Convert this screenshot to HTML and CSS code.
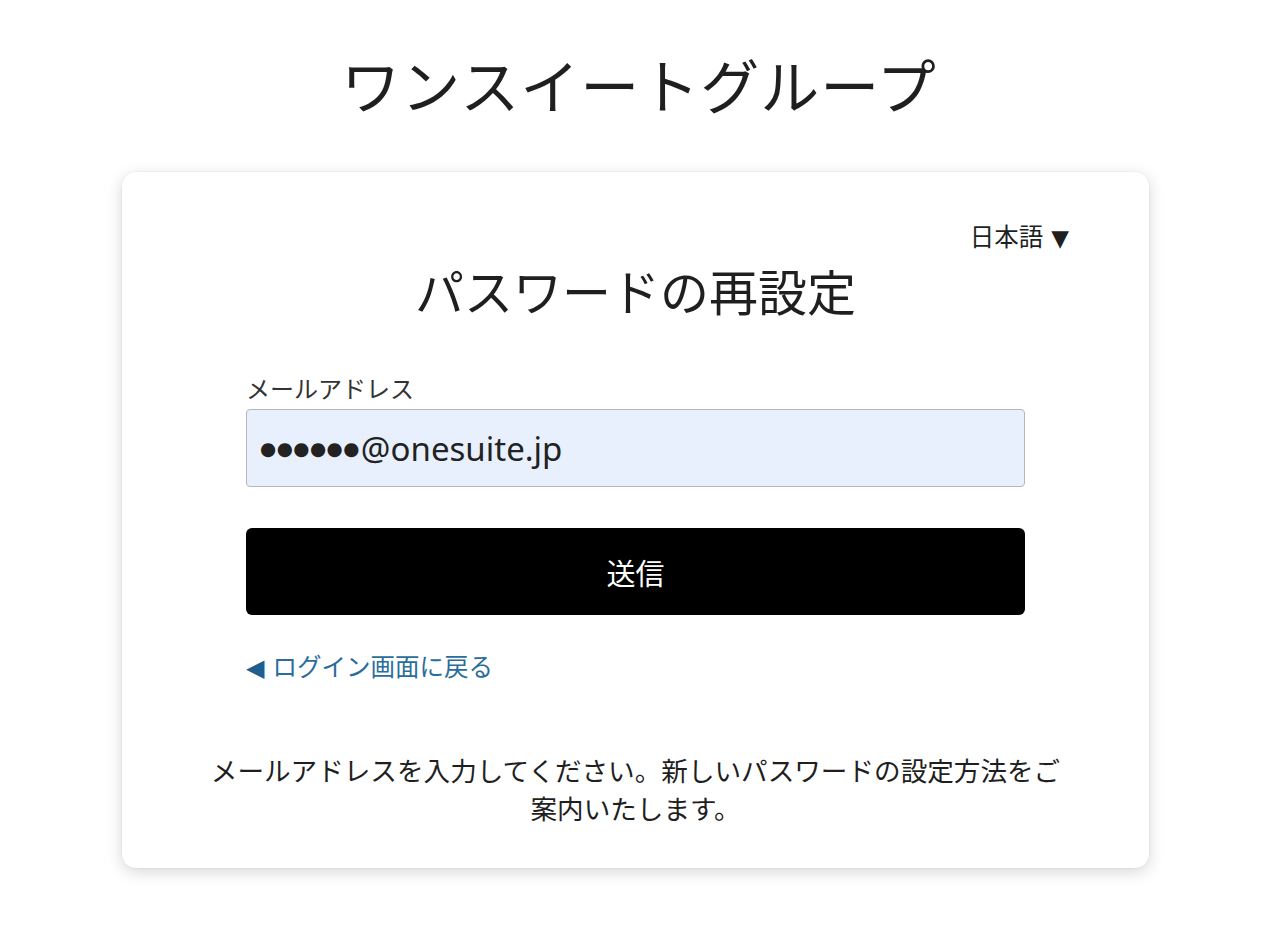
FILE: index.html
```html
<!DOCTYPE html>
<html lang="ja">
  <head>
    <meta charset="UTF-8" />
    <meta name="viewport" content="width=device-width, initial-scale=1.0" />
    <title>パスワードの再設定</title>
    <link rel="stylesheet" href="styles.css">
  </head>
  <body>
    <h1 class="brand">ワンスイートグループ</h1>

    <div class="card">
      <div class="lang-row">
        <button class="lang">日本語<span class="caret">▼</span></button>
      </div>

      <h2 class="card-title">パスワードの再設定</h2>

      <form class="reset-form">
        <label class="field-label" for="email">メールアドレス</label>
        <div class="field-input" id="email"><span class="mask">●●●●●●</span>@onesuite.jp</div>

        <button type="button" class="submit">送信</button>

        <a href="#" class="back-link"><span class="back-arrow">◀</span>ログイン画面に戻る</a>
      </form>

      <p class="note">メールアドレスを入力してください。新しいパスワードの設定方法をご<br>案内いたします。</p>
    </div>
  </body>
</html>
```

FILE: styles.css
```css
body {
  margin: 0;
  padding-bottom: 60px;
  font-family: "Noto Sans CJK JP", "Noto Sans", sans-serif;
  color: #1f1f1f;
  background: #fff;
  display: flex;
  flex-direction: column;
  align-items: center;
}

.brand {
  margin: 49px 0 0;
  font-size: 59px;
  font-weight: 400;
  line-height: 70px;
  letter-spacing: 1px;
}

.card {
  width: 1027px;
  box-sizing: border-box;
  margin-top: 53px;
  margin-right: 7px;
  padding: 49px 80px 41px;
  background: #fff;
  border-radius: 14px;
  box-shadow: 0 4px 16px rgba(0, 0, 0, 0.16), 0 0 2px rgba(0, 0, 0, 0.08);
}

.lang-row {
  display: flex;
  justify-content: flex-end;
}

.lang {
  border: none;
  background: none;
  padding: 0;
  font-family: inherit;
  font-size: 24.5px;
  line-height: 30px;
  color: #1f1f1f;
  cursor: pointer;
}

.caret {
  font-family: "DejaVu Sans", sans-serif;
  font-size: 23px;
  margin-left: 8px;
}

.card-title {
  margin: 7px 0 0;
  text-align: center;
  font-size: 49px;
  font-weight: 400;
  line-height: 60px;
}

.reset-form {
  margin: 52px 44px 0;
  display: flex;
  flex-direction: column;
}

.field-label {
  font-size: 24px;
  line-height: 32px;
  color: #333;
}

.field-input {
  margin-top: 5px;
  height: 78px;
  box-sizing: border-box;
  padding: 0 13px;
  display: flex;
  align-items: center;
  background: #e8f0fe;
  border: 1.5px solid #b4b8bd;
  border-radius: 4px;
  font-family: "Noto Sans", sans-serif;
  font-size: 33px;
  color: #222;
}

.mask {
  font-family: "DejaVu Sans", sans-serif;
  font-size: 18.5px;
  letter-spacing: 0.5px;
  margin-right: 1px;
}

.submit {
  margin-top: 41px;
  height: 87px;
  border: none;
  border-radius: 6px;
  background: #000;
  color: #fff;
  font-family: inherit;
  font-size: 29px;
  cursor: pointer;
}

.back-link {
  margin-top: 35px;
  align-self: flex-start;
  font-size: 24.5px;
  line-height: 32px;
  color: #2a6d9b;
  text-decoration: none;
}

.back-arrow {
  font-family: "DejaVu Sans", sans-serif;
  font-size: 24px;
  margin-right: 8px;
  color: #1f5f8f;
}

.note {
  margin: 67px 0 0;
  text-align: center;
  font-size: 26.6px;
  line-height: 38px;
  color: #1f1f1f;
}
```
